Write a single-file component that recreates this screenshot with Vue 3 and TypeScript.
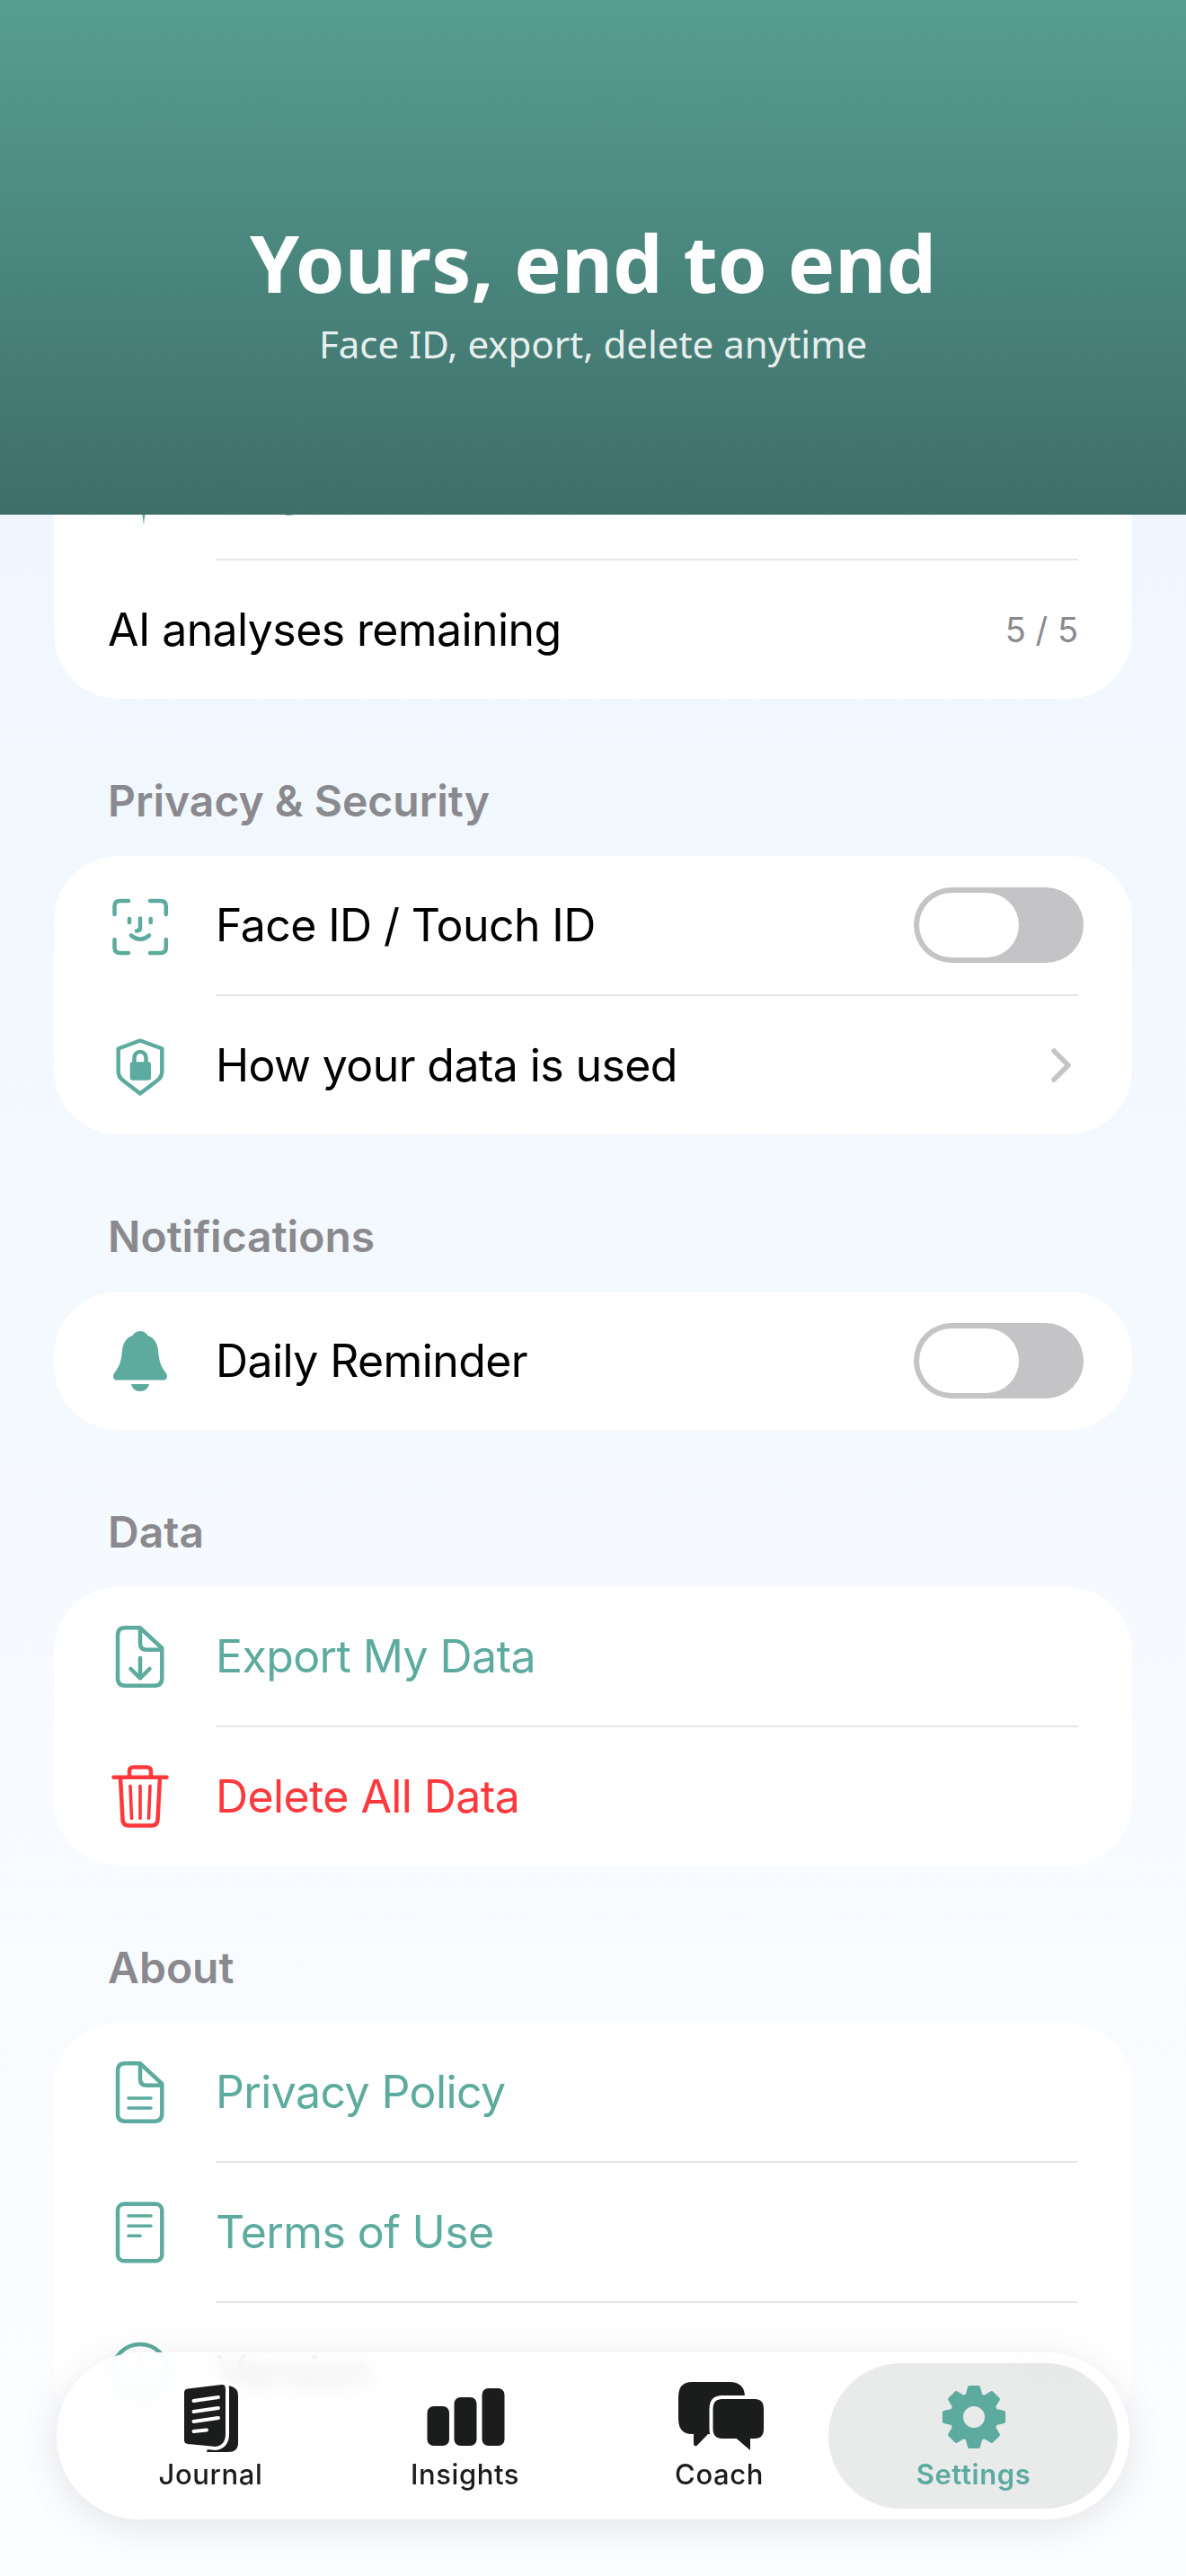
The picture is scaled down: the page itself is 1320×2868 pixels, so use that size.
<template>
  <div class="screen">
    <header class="hero">
      <h1 class="hero-title">Yours, end to end</h1>
      <p class="hero-sub">Face ID, export, delete anytime</p>
    </header>

    <main class="content">
      <div class="card first-card">
        <div class="row">
          <svg class="icon" viewBox="0 0 72 72">
            <path class="solid" d="M40 2C42 24 48 34 70 38C48 42 42 52 40 76C38 52 32 42 10 38C32 34 38 24 40 2Z" />
          </svg>
          <span class="row-text teal">Upgrade to Pro</span>
        </div>
        <div class="divider"></div>
        <div class="row">
          <span class="row-text">AI analyses remaining</span>
          <span class="row-value">5 / 5</span>
        </div>
      </div>

      <h2 class="section-label">Privacy &amp; Security</h2>
      <div class="card">
        <div class="row">
          <svg class="icon" viewBox="0 0 72 72">
            <path class="line" d="M7.5 24V15Q7.5 9 13.5 9H23M47 9H58.5Q64.8 9 64.8 15V24M7.5 52V61Q7.5 67 13.5 67H23M47 67H58.5Q64.8 67 64.8 61V52" />
            <path class="line" d="M24 29V33M47.7 29V33M36 28.500V38.500Q36 42.500 32 42.500M26 47.500Q36 56 46 47.500" />
          </svg>
          <span class="row-text">Face ID / Touch ID</span>
          <span class="toggle"><span class="thumb"></span></span>
        </div>
        <div class="divider"></div>
        <div class="row">
          <svg class="icon" viewBox="0 0 72 72">
            <path class="line" d="M36 8.500L60.300 17.500V43Q60.300 49 55 53L36 67.500L17 53Q11.700 49 11.700 43V17.500Z" />
            <path class="line" d="M29.500 33V27.500A6.500 6.500 0 0 1 42.500 27.500V33" />
            <rect class="solid" x="24.700" y="32.300" width="23.300" height="20.400" rx="3" />
          </svg>
          <span class="row-text">How your data is used</span>
          <svg class="chevron" viewBox="0 0 24 38">
            <path d="M3 3L19 19L3 35" />
          </svg>
        </div>
      </div>

      <h2 class="section-label">Notifications</h2>
      <div class="card">
        <div class="row">
          <svg class="icon" viewBox="0 0 72 72">
            <path class="solid" d="M36 3C40 3 43 5 44.500 8C51 10 55 16 56 24C57 35 58 41 65 50C67 53 66 57 63 57.500H9C6 57 5 53 7 50C14 41 15 35 16 24C17 16 21 10 27.500 8C29 5 32 3 36 3Z" />
            <path class="solid" d="M26 62H46C45 67 41 70 36 70C31 70 27 67 26 62Z" />
          </svg>
          <span class="row-text">Daily Reminder</span>
          <span class="toggle"><span class="thumb"></span></span>
        </div>
      </div>

      <h2 class="section-label">Data</h2>
      <div class="card">
        <div class="row">
          <svg class="icon" viewBox="0 0 72 72">
            <path class="line" d="M19 4.300H36L60.300 27V60Q60.300 68.700 52 68.700H19Q11 68.700 11 60V13Q11 4.300 19 4.300Z" />
            <path class="line" d="M36 5V22Q36 28.700 43 28.700H59" />
            <path class="line" d="M36 38V60.500M25.500 50L36 60.500L46.500 50" />
          </svg>
          <span class="row-text teal">Export My Data</span>
        </div>
        <div class="divider"></div>
        <div class="row">
          <svg class="icon red" viewBox="0 0 72 72">
            <path class="line" d="M6.500 14.700H65.500M24 14V8Q24 3.500 29 3.500H43Q48 3.500 48 8V14" />
            <path class="line" d="M14 15L16.500 62Q17 68.500 23 68.500H49Q55 68.500 55.500 62L58 15" />
            <path class="line thin" d="M25 24.500L26.500 60.500M36 24.500V60.500M47 24.500L45.500 60.500" />
          </svg>
          <span class="row-text red">Delete All Data</span>
        </div>
      </div>

      <h2 class="section-label">About</h2>
      <div class="card">
        <div class="row">
          <svg class="icon" viewBox="0 0 72 72">
            <path class="line" d="M19 4.300H36L60.300 27V60Q60.300 68.700 52 68.700H19Q11 68.700 11 60V13Q11 4.300 19 4.300Z" />
            <path class="line" d="M36 5V22Q36 28.700 43 28.700H59" />
            <path class="line thin" d="M23 43H48M23 54H48" />
          </svg>
          <span class="row-text teal">Privacy Policy</span>
        </div>
        <div class="divider"></div>
        <div class="row">
          <svg class="icon" viewBox="0 0 72 72">
            <rect class="line" x="11" y="4.700" width="49.300" height="63.600" rx="7" />
            <path class="line thin" d="M23 18H48M23 29.300H48M23 40.300H36" />
          </svg>
          <span class="row-text teal">Terms of Use</span>
        </div>
        <div class="divider"></div>
        <div class="row">
          <svg class="icon" viewBox="0 0 72 72">
            <circle class="line" cx="36" cy="36" r="31" />
            <path class="line" d="M36 32V52M36 21V23" />
          </svg>
          <span class="row-text">Version</span>
          <span class="row-value">1.0.0</span>
        </div>
      </div>
    </main>

    <nav class="tabbar">
      <div class="tab">
        <svg class="tab-icon" viewBox="0 0 110 80">
          <path class="tab-solid" d="M70 4Q85 4 85 15V68Q85 78 74 78H50Z" />
          <path class="tab-solid page" d="M23 12Q23 6 29 5.500L66 1Q73 0 73 8V58Q73 72 60 74L29 71Q23 70 23 65Z" />
          <path class="tab-lines" d="M35.500 21L63 17M35.500 33L63 29M35.500 44L63 40M35.500 55L50 53.500" />
        </svg>
        <span class="tab-label">Journal</span>
      </div>
      <div class="tab">
        <svg class="tab-icon" viewBox="0 0 110 80">
          <rect class="tab-solid" x="12.500" y="27" width="24.500" height="44" rx="7" />
          <rect class="tab-solid" x="42.500" y="17" width="25" height="54" rx="7" />
          <rect class="tab-solid" x="73.500" y="7" width="25" height="64" rx="7" />
        </svg>
        <span class="tab-label">Insights</span>
      </div>
      <div class="tab">
        <svg class="tab-icon" viewBox="0 0 110 80">
          <path class="tab-solid" d="M24 0H66Q83 0 83 17V41Q83 58 66 58H42L29.500 71Q26 72 26 68V58H24Q9 58 9 41V17Q9 0 24 0Z" />
          <path class="tab-solid bubble" d="M58 17H94Q106 17 106 30V52Q106 65 94 65H91V75Q91 79 87 77L73 65H58Q45.500 65 45.500 52V30Q45.500 17 58 17Z" />
        </svg>
        <span class="tab-label">Coach</span>
      </div>
      <div class="tab active">
        <span class="pill"></span>
        <svg class="tab-icon" viewBox="0 0 110 80">
          <path class="gear" :d="gearPath" />
        </svg>
        <span class="tab-label">Settings</span>
      </div>
    </nav>
  </div>
</template>

<script setup lang="ts">
// 8-tooth gear, drawn around the centre of the tab icon
function buildGear(cx: number, cy: number) {
  const pts: string[] = []
  const teeth = 8
  for (let i = 0; i < teeth; i++) {
    const a = (i / teeth) * Math.PI * 2 - Math.PI / 2
    const at = (r: number, off: number) =>
      `${(cx + Math.cos(a + off) * r).toFixed(2)} ${(cy + Math.sin(a + off) * r).toFixed(2)}`
    pts.push(at(25, -0.3), at(33.5, -0.15), at(33.5, 0.15), at(25, 0.3))
  }
  const r = 14
  const hole = `M${cx - r} ${cy}a${r} ${r} 0 1 0 ${r * 2} 0a${r} ${r} 0 1 0 ${-r * 2} 0Z`
  return `M${pts.join('L')}Z${hole}`
}

const gearPath = buildGear(55, 39)
</script>

<style scoped>
.screen {
  position: relative;
  height: 2868px;
  overflow: hidden;
  background: linear-gradient(180deg, #ecf5fd 0%, #fcfdff 100%);
  font-family: Inter, "Liberation Sans", sans-serif;
}
.hero {
  position: relative;
  z-index: 2;
  height: 573px;
  box-sizing: border-box;
  padding-top: 236px;
  text-align: center;
  color: #fff;
  font-family: "Noto Sans", sans-serif;
  background: linear-gradient(180deg, #569e92 0%, #3e6f69 100%);
}
.hero-title {
  margin: 0;
  font-size: 88px;
  line-height: 112px;
  font-weight: 700;
}
.hero-sub {
  margin: 6px 0 0;
  font-size: 42px;
  line-height: 58px;
  color: rgba(255, 255, 255, 0.9);
}
.content {
  margin-top: -105px;
  padding: 0 60px;
}
.card {
  background: #fff;
  border-radius: 72px;
}
.row {
  display: flex;
  align-items: center;
  gap: 48px;
  height: 154px;
  padding: 0 60px;
}
.divider {
  height: 2px;
  margin: 0 60px 0 180px;
  background: #e6e6e6;
}
.icon {
  width: 72px;
  height: 72px;
  flex-shrink: 0;
  overflow: visible;
}
.solid {
  fill: #5dab9f;
}
.line {
  fill: none;
  stroke: #5dab9f;
  stroke-width: 4.5;
  stroke-linecap: round;
  stroke-linejoin: round;
}
.thin {
  stroke-width: 3.6;
}
.icon.red .line {
  stroke: #ff383c;
}
.row-text {
  flex: 1;
  font-size: 50px;
  letter-spacing: -0.6px;
  color: #000;
}
.teal {
  color: #5dab9f;
}
.row-text.red {
  color: #ff383c;
}
.row-value {
  font-size: 38px;
  color: #8a8a8e;
}
.toggle {
  display: flex;
  align-items: center;
  width: 189px;
  height: 84px;
  box-sizing: border-box;
  padding: 6px;
  margin-right: -6px;
  border-radius: 42px;
  background: #c4c4c6;
}
.thumb {
  width: 111px;
  height: 72px;
  border-radius: 36px;
  background: #fff;
}
.chevron {
  width: 24px;
  height: 38px;
  margin-right: 6px;
}
.chevron path {
  fill: none;
  stroke: #c4c4c6;
  stroke-width: 5.5;
  stroke-linecap: round;
  stroke-linejoin: round;
}
.section-label {
  margin: 84px 0 31px 60px;
  font-size: 48px;
  line-height: 60px;
  font-weight: 600;
  color: #8a8a8e;
}
.first-card + .section-label {
  margin-top: 84px;
}
.tabbar {
  position: absolute;
  z-index: 3;
  left: 63px;
  right: 63px;
  bottom: 63px;
  height: 186px;
  box-sizing: border-box;
  display: grid;
  grid-template-columns: repeat(4, 283px);
  padding: 0 30px;
  border-radius: 93px;
  background: rgba(255, 255, 255, 0.9);
  -webkit-backdrop-filter: blur(10px);
  backdrop-filter: blur(10px);
  box-shadow: 0 8px 44px rgba(0, 0, 0, 0.1);
}
.tab {
  position: relative;
  display: flex;
  flex-direction: column;
  align-items: center;
  padding-top: 33px;
}
.pill {
  position: absolute;
  top: 12px;
  bottom: 12px;
  left: -20px;
  right: -19px;
  border-radius: 81px;
  background: rgba(120, 130, 130, 0.16);
}
.tab-icon {
  position: relative;
  width: 110px;
  height: 80px;
  overflow: visible;
}
.tab-solid {
  fill: #1b1c1c;
}
.tab-solid.page,
.tab-solid.bubble {
  stroke: #fff;
  stroke-width: 4;
}
.tab-lines {
  fill: none;
  stroke: #fff;
  stroke-width: 4;
  stroke-linecap: round;
}
.gear {
  fill: #5dab9f;
  fill-rule: evenodd;
  stroke: #5dab9f;
  stroke-width: 4;
  stroke-linejoin: round;
}
.tab-label {
  position: relative;
  margin-top: 3px;
  font-size: 31px;
  line-height: 40px;
  font-weight: 500;
  letter-spacing: 0.6px;
  color: #1b1c1c;
}
.active .tab-label {
  color: #5dab9f;
  font-weight: 600;
}
</style>
